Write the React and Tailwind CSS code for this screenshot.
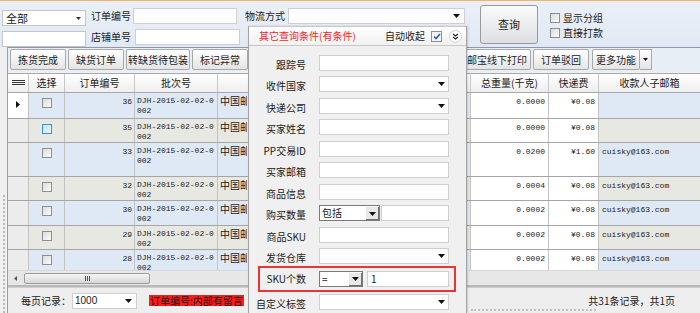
import React from 'react';

const rows = [
  { n: 36, h: 'h-[26px]', blue: true, w: '0.0000', fee: '¥0.08', mail: '', cur: true },
  { n: 35, h: 'h-[24px]', blue: false, w: '0.0000', fee: '¥0.08', mail: '', hover: true },
  { n: 33, h: 'h-[34px]', blue: true, w: '0.0200', fee: '¥1.60', mail: 'cuisky@163.com' },
  { n: 32, h: 'h-[24px]', blue: false, w: '0.0004', fee: '¥0.08', mail: 'cuisky@163.com' },
  { n: 30, h: 'h-[25px]', blue: true, w: '0.0002', fee: '¥0.08', mail: 'cuisky@163.com' },
  { n: 29, h: 'h-[24px]', blue: false, w: '0.0002', fee: '¥0.08', mail: 'cuisky@163.com' },
  { n: 28, h: 'h-[24px]', blue: true, w: '0.0002', fee: '¥0.08', mail: 'cuisky@163.com' },
];

const fields = [
  { label: '跟踪号' },
  { label: '收件国家', drop: true },
  { label: '快递公司', drop: true },
  { label: '买家姓名' },
  { label: 'PP交易ID' },
  { label: '买家邮箱' },
  { label: '商品信息' },
  { label: '购买数量', combo: '包括' },
  { label: '商品SKU' },
  { label: '发货仓库', drop: true },
];

function Arrow() {
  return (
    <svg width="7" height="4" viewBox="0 0 7 4" className="shrink-0">
      <polygon points="0,0 7,0 3.5,4" fill="#111" />
    </svg>
  );
}

function Box({ className = '' }) {
  return <div className={`w-[10px] h-[10px] border border-[#8e8f8f] bg-gradient-to-br from-[#dcdcdc] to-[#fbfbfb] ${className}`} />;
}

function ComboBtn() {
  return (
    <div className="w-[14px] h-full flex items-center justify-center bg-[#e8e8e8] border-l border-t border-white shadow-[inset_-1px_-1px_0_#6f6f6f]">
      <Arrow />
    </div>
  );
}

function TbBtn({ children, w }) {
  return (
    <div className={`${w} h-[21px] shrink-0 flex items-center justify-center border border-[#a9a9a9] rounded-[2px] bg-gradient-to-b from-[#ffffff] to-[#e4e4e4] text-[10px] text-[#222] overflow-hidden whitespace-nowrap`}>
      {children}
    </div>
  );
}

export default function App() {
  return (
    <div className="w-[700px] h-[313px] relative overflow-hidden bg-[#f0f0f0] text-[10px] text-[#1a1a1a] font-[family-name:Noto_Sans_CJK_SC,sans-serif] leading-none">
      {/* top search bar */}
      <div className="h-[47px] border-t border-[#f2b464] bg-gradient-to-b from-[#eaf0f8] to-[#e2e9f4] flex items-start pl-[2px]">
        <div className="w-[84px] flex flex-col">
          <div className="mt-[9px] h-[16px] bg-white border border-[#c5c5c5] flex items-center justify-between pl-[3px] pr-[4px] text-[11px]">
            <span>全部</span>
            <svg width="5" height="3" viewBox="0 0 5 3"><polygon points="0,0 5,0 2.5,3" fill="#333" /></svg>
          </div>
          <div className="mt-[5px] h-[16px] bg-white border border-[#c5c5c5]" />
        </div>
        <div className="ml-[5px] flex flex-col">
          <div className="mt-[7px] h-[16px] flex items-center">
            <span className="w-[42px]">订单编号</span>
            <div className="w-[104px] h-full bg-white border border-[#cfcfcf]" />
          </div>
          <div className="mt-[5px] h-[16px] flex items-center">
            <span className="w-[44px]">店铺单号</span>
            <div className="w-[105px] h-full bg-white border border-[#cfcfcf]" />
          </div>
        </div>
        <div className="ml-[5px] mt-[7px] h-[16px] flex items-center">
          <span className="w-[43px]">物流方式</span>
          <div className="w-[177px] h-full bg-white border border-[#cfcfcf] flex items-center justify-end pr-[4px]">
            <Arrow />
          </div>
        </div>
        <div className="ml-[15px] mt-[4px] w-[58px] h-[39px] border border-[#9a9a9a] rounded-[3px] bg-gradient-to-b from-[#fafafa] to-[#dcdfe3] flex items-center justify-center text-[11px]">
          查询
        </div>
        <div className="ml-[12px] mt-[12px] flex flex-col gap-[5px]">
          <div className="flex items-center gap-[3px]"><Box />显示分组</div>
          <div className="flex items-center gap-[3px]"><Box />直接打款</div>
        </div>
      </div>

      {/* main */}
      <div className="h-[266px] flex">
        <div className="w-[7px] flex justify-center pt-[148px]">
          <div className="h-full border-l-2 border-dotted border-[#b8b8b8]" />
        </div>
        <div className="flex-1 flex flex-col border-l border-[#9c9c9c]">
          {/* toolbar */}
          <div className="h-[25px] flex items-center gap-[2px] pl-[2px] bg-[#e8eef6] border-t border-[#8c98a8]">
            <TbBtn w="w-[56px]">拣货完成</TbBtn>
            <TbBtn w="w-[56px]">缺货订单</TbBtn>
            <TbBtn w="w-[64px]">转缺货待包装</TbBtn>
            <TbBtn w="w-[56px]">标记异常</TbBtn>
            <TbBtn w="w-[56px]" />
            <TbBtn w="w-[56px]" />
            <div className="flex-1" />
            <TbBtn w="w-[68px]">邮宝线下打印</TbBtn>
            <TbBtn w="w-[56px]">订单驳回</TbBtn>
            <div className="flex ml-[1px] mr-[48px]">
              <TbBtn w="w-[48px]">更多功能</TbBtn>
              <div className="w-[12px] h-[21px] border border-[#a9a9a9] border-l-0 bg-gradient-to-b from-white to-[#e4e4e4] flex items-center justify-center">
                <svg width="5" height="3" viewBox="0 0 5 3"><polygon points="0,0 5,0 2.5,3" fill="#111" /></svg>
              </div>
            </div>
          </div>

          {/* grid header */}
          <div className="h-[20px] mt-[1px] grid grid-cols-[21px_36px_70px_83px_253px_78px_50px_1fr] bg-gradient-to-b from-white to-[#eeeeee] border-t border-b border-[#a8a8a8] text-[10px]">
            <div className="flex flex-col justify-center items-center gap-[1px] border-r border-[#c8c8c8]">
              <div className="w-[13px] h-[1px] bg-[#333]" />
              <div className="w-[13px] h-[1px] bg-[#333]" />
              <div className="w-[13px] h-[1px] bg-[#333]" />
            </div>
            <div className="flex items-center justify-center border-r border-[#c8c8c8]">选择</div>
            <div className="flex items-center justify-center border-r border-[#c8c8c8]">订单编号</div>
            <div className="flex items-center justify-center border-r border-[#c8c8c8]">批次号</div>
            <div className="border-r border-[#c8c8c8]" />
            <div className="flex items-center justify-center border-r border-[#c8c8c8]">总重量(千克)</div>
            <div className="flex items-center justify-center border-r border-[#c8c8c8]">快递费</div>
            <div className="flex items-center justify-center">收款人子邮箱</div>
          </div>

          {/* grid body */}
          <div className="h-[179px] overflow-hidden bg-white">
            {rows.map((r) => {
              const bg = r.blue ? 'bg-[#dfe9f5]' : 'bg-[#e8e8e3]';
              return (
                <div key={r.n} className={`${r.h} grid grid-cols-[21px_36px_70px_83px_253px_78px_50px_1fr] border-b border-[#a5a5a5] font-[family-name:Liberation_Mono,monospace] text-[8px] leading-[10px] whitespace-nowrap`}>
                  <div className={`${r.cur ? 'bg-white' : 'bg-[#ececec]'} border-r border-[#c2c2c2] flex items-start justify-center pt-[8px]`}>
                    {r.cur && (
                      <svg width="4" height="7" viewBox="0 0 4 7"><polygon points="0,0 4,3.5 0,7" fill="#111" /></svg>
                    )}
                  </div>
                  <div className={`${bg} border-r border-[#c2c2c2] flex justify-center pt-[5px]`}>
                    {r.hover ? (
                      <div className="w-[10px] h-[10px] border border-[#3c8fd8] bg-gradient-to-br from-[#bfe2fb] to-[#eaf6fe]" />
                    ) : (
                      <Box />
                    )}
                  </div>
                  <div className={`${bg} border-r border-[#c2c2c2] text-right pr-[2px] pt-[4px]`}>{r.n}</div>
                  <div className={`${bg} border-r border-[#c2c2c2] pl-[2px] pt-[3px] overflow-hidden`}>
                    <div>DJH-2015-02-02-0</div>
                    <div>002</div>
                  </div>
                  <div className={`${bg} border-r border-[#c2c2c2] pl-[2px] pt-[3px]`}>
                    <div className="w-[27px] overflow-hidden font-[family-name:Noto_Sans_CJK_SC,sans-serif] text-[10px]">中国邮政小包</div>
                  </div>
                  <div className="bg-white border-r border-[#c2c2c2] text-right pr-[3px] pt-[4px]">{r.w}</div>
                  <div className="bg-white border-r border-[#c2c2c2] text-right pr-[3px] pt-[4px]">{r.fee}</div>
                  <div className={`${bg} pl-[3px] pt-[4px]`}>{r.mail}</div>
                </div>
              );
            })}
          </div>

          {/* horizontal scrollbar */}
          <div className="h-[15px] bg-[#e7e7e7] flex items-center pl-[6px] border-t border-[#d8d8d8]">
            <svg width="3" height="5" viewBox="0 0 3 5"><polygon points="3,0 3,5 0,2.5" fill="#555" /></svg>
            <div className="ml-[7px] w-[126px] h-[11px] rounded-[2px] border border-[#9c9c9c] bg-gradient-to-b from-[#f6f6f6] to-[#d6d6d6] flex items-center justify-center gap-[1px]">
              <div className="w-[1px] h-[5px] bg-[#555]" />
              <div className="w-[1px] h-[5px] bg-[#555]" />
              <div className="w-[1px] h-[5px] bg-[#555]" />
            </div>
          </div>
          <div className="h-[3px] bg-[#b9b9b9] border-b border-[#d0d0d0]" />

          {/* footer */}
          <div className="flex-1 flex flex-col bg-[#eeeeee]">
            <div className="h-[21px] flex items-center pl-[13px] pt-[5px]">
              <span>每页记录：</span>
              <div className="ml-[1px] w-[65px] h-[16px] bg-white border border-[#cfcfcf] flex items-center justify-between pl-[2px] pr-[4px] font-[family-name:Liberation_Sans,sans-serif]">
                <span>1000</span>
                <Arrow />
              </div>
              <div className="ml-[12px] h-[11px] px-[1px] bg-[#ff1a1a] text-[#1a1a1a] flex items-center">订单编号:内部有留言</div>
              <div className="ml-[4px] w-[6px] h-[9px] bg-[#fff200]" />
              <div className="flex-1" />
              <span className="mr-[25px]">共31条记录，共1页</span>
            </div>
            <div className="mt-auto mb-[2px] ml-[463px] w-[125px] border-t-2 border-dotted border-[#c0c0c0]" />
          </div>
        </div>
      </div>

      {/* popup query panel */}
      <div className="absolute left-[248px] top-[26px] w-[219px] bottom-0 bg-[#f0f0f0] border-l border-r border-[#a3a3a3] shadow-[1px_0_2px_rgba(0,0,0,0.15)]">
        <div className="h-[20px] flex items-center bg-gradient-to-b from-white to-[#f1f1f1] border-b border-t border-[#c8c8c8] pl-[10px] pr-[4px]">
          <span className="text-[#ff2020]">其它查询条件(有条件)</span>
          <div className="flex-1" />
          <span>自动收起</span>
          <div className="ml-[6px] w-[11px] h-[11px] border border-[#8e8f8f] bg-[#f4f4f4] flex items-center justify-center">
            <svg width="8" height="7" viewBox="0 0 8 7"><polyline points="1,3.5 3,5.5 7,1" fill="none" stroke="#2a5fb0" strokeWidth="1.6" /></svg>
          </div>
          <div className="ml-[7px] w-[13px] h-[13px] rounded-full bg-white border border-[#d0d0d0] flex items-center justify-center">
            <svg width="7" height="7" viewBox="0 0 7 7"><polyline points="1,1 3.5,3 6,1" fill="none" stroke="#222" strokeWidth="1.2" /><polyline points="1,4 3.5,6 6,4" fill="none" stroke="#222" strokeWidth="1.2" /></svg>
          </div>
        </div>
        <div className="pt-[6px]">
          {fields.map((f) => (
            <div key={f.label} className="h-[21.5px] flex items-center">
              <span className="w-[57px] text-right pt-[4px]">{f.label}</span>
              {f.combo ? (
                <div className="ml-[13px] w-[130px] h-[16px] flex">
                  <div className="w-[61px] h-full bg-white border border-[#7a7a7a] flex">
                    <span className="flex-1 pl-[2px] flex items-center">{f.combo}</span>
                    <ComboBtn />
                  </div>
                  <div className="ml-[1px] flex-1 h-full bg-white border border-[#cfcfcf]" />
                </div>
              ) : (
                <div className="ml-[13px] w-[130px] h-[16px] bg-white border border-[#cfcfcf] flex items-center justify-end pr-[3px]">
                  {f.drop && <Arrow />}
                </div>
              )}
            </div>
          ))}
          <div className="ml-[9px] mt-[-1.5px] w-[198px] h-[26px] border-2 border-[#e83535] flex items-center">
            <span className="w-[46px] text-right">SKU个数</span>
            <div className="ml-[13px] w-[44px] h-[16px] bg-white border border-[#7a7a7a] flex">
              <span className="flex-1 pl-[2px] flex items-center">=</span>
              <ComboBtn />
            </div>
            <div className="ml-[4px] w-[82px] h-[16px] bg-white border border-[#cfcfcf] flex items-center pl-[3px]">1</div>
          </div>
          <div className="h-[21px] flex items-center">
            <span className="w-[57px] text-right pt-[3px]">自定义标签</span>
            <div className="ml-[13px] w-[130px] h-[16px] bg-white border border-[#cfcfcf] flex items-center justify-end pr-[3px]">
              <Arrow />
            </div>
          </div>
        </div>
      </div>
    </div>
  );
}
